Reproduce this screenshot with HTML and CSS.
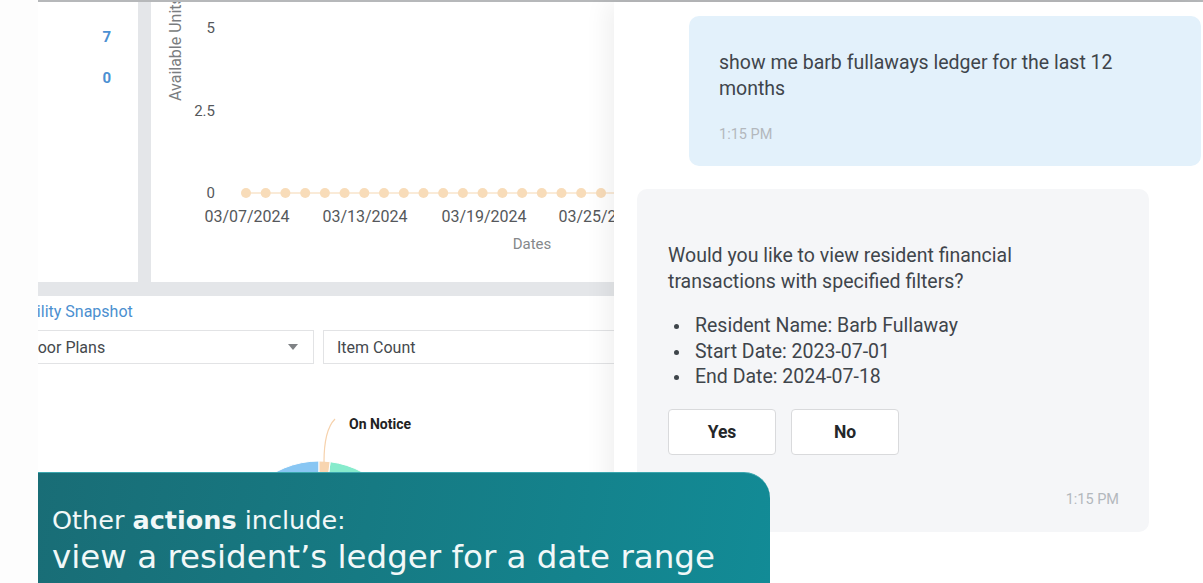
FILE: index.html
```html
<!DOCTYPE html>
<html lang="en">
<head>
<meta charset="utf-8">
<title>Resident ledger assistant</title>
<link rel="stylesheet" href="styles.css">
</head>
<body>
<div class="screen">
  <div class="gutter"></div>
  <div class="app">
    <section class="dash">
      <div class="card stats">
        <div class="stat">100</div>
        <div class="stat">7</div>
        <div class="stat">0</div>
      </div>
      <div class="card chart">
        <svg class="chart-svg" width="463" height="280" viewBox="0 0 463 280">
          <text class="axis-title" transform="translate(30,99) rotate(-90)">Available Units</text>
          <text class="tick" x="64" y="31.3">5</text>
          <text class="tick" x="64" y="114.3">2.5</text>
          <text class="tick" x="64" y="196.3">0</text>
          <line x1="95" y1="191" x2="470" y2="191" stroke="#f9e4cb" stroke-width="1.5"/>
          <g fill="#f8dcb9">
            <circle cx="95" cy="191" r="5"/><circle cx="114.7" cy="191" r="5"/><circle cx="134.4" cy="191" r="5"/><circle cx="154.2" cy="191" r="5"/><circle cx="173.9" cy="191" r="5"/><circle cx="193.6" cy="191" r="5"/><circle cx="213.3" cy="191" r="5"/><circle cx="233" cy="191" r="5"/><circle cx="252.8" cy="191" r="5"/><circle cx="272.5" cy="191" r="5"/><circle cx="292.2" cy="191" r="5"/><circle cx="311.9" cy="191" r="5"/><circle cx="331.6" cy="191" r="5"/><circle cx="351.4" cy="191" r="5"/><circle cx="371.1" cy="191" r="5"/><circle cx="390.8" cy="191" r="5"/><circle cx="410.5" cy="191" r="5"/><circle cx="430.2" cy="191" r="5"/><circle cx="450" cy="191" r="5"/><circle cx="469.7" cy="191" r="5"/>
          </g>
          <text class="xlabel" x="96" y="219.7">03/07/2024</text>
          <text class="xlabel" x="214" y="219.7">03/13/2024</text>
          <text class="xlabel" x="333" y="219.7">03/19/2024</text>
          <text class="xlabel" x="450" y="219.7">03/25/2024</text>
          <text class="axis-name" x="381" y="247.3">Dates</text>
        </svg>
      </div>
      <div class="card snapshot">
        <div class="snap-title">Availability Snapshot</div>
        <div class="filters">
          <div class="select select-plans">
            <span>Floor Plans</span>
            <span class="caret"></span>
          </div>
          <div class="select select-count"><span>Item Count</span></div>
        </div>
        <svg class="pie-svg" width="576" height="219" viewBox="0 0 576 219">
          <path d="M281,188 L281,97 A91,91 0 0,0 281,279 Z" fill="#88c6f3" stroke="#fff" stroke-width="1"/>
          <path d="M281,188 L292.1,97.7 A91,91 0 0,1 281,279 Z" fill="#86ebcc" stroke="#fff" stroke-width="1"/>
          <path d="M281,188 L281,97 A91,91 0 0,1 292.1,97.7 Z" fill="#f8d5b0" stroke="#fff" stroke-width="1"/>
          <path d="M286,98 C286,76 289,63 297,55" fill="none" stroke="#f6d2ad" stroke-width="1.2"/>
          <text class="pie-label" x="311" y="64.6">On Notice</text>
        </svg>
      </div>
    </section>
    <aside class="chat">
      <div class="bubble bubble-user">
        <p class="msg">show me barb fullaways ledger for the last 12 months</p>
        <div class="time">1:15 PM</div>
      </div>
      <div class="bubble bubble-bot">
        <p class="msg">Would you like to view resident financial transactions with specified filters?</p>
        <ul class="filters-list">
          <li>Resident Name: Barb Fullaway</li>
          <li>Start Date: 2023-07-01</li>
          <li>End Date: 2024-07-18</li>
        </ul>
        <div class="actions">
          <button class="btn">Yes</button>
          <button class="btn">No</button>
        </div>
        <div class="time time-right">1:15 PM</div>
      </div>
    </aside>
  </div>
  <div class="banner">
    <p class="banner-line1">Other <b>actions</b> include:</p>
    <p class="banner-line2">view a resident’s ledger for a date range</p>
  </div>
</div>
</body>
</html>
```

FILE: styles.css
```css
* { box-sizing: border-box; }

html, body {
  margin: 0;
  padding: 0;
  background: #fdfdfd;
}

body {
  font-family: Roboto, "Liberation Sans", Arial, sans-serif;
  color: #3f454b;
}

.screen {
  position: relative;
  display: flex;
  width: 1203px;
  height: 583px;
  overflow: hidden;
  background: #fdfdfd;
}

.gutter {
  flex: none;
  width: 38px;
}

.app {
  flex: 1;
  display: flex;
  border-top: 2px solid #b6b8ba;
  min-width: 0;
}

/* ---------- dashboard ---------- */
.dash {
  flex: none;
  width: 576px;
  display: grid;
  grid-template-columns: 100px 1fr;
  grid-template-rows: 280px 1fr;
  column-gap: 13px;
  row-gap: 14px;
  background: #e4e6e9;
  overflow: hidden;
}

.card {
  background: #fff;
  overflow: hidden;
}

.stats {
  padding-right: 27px;
  text-align: right;
}

.stat {
  font-size: 15px;
  font-weight: 700;
  line-height: 41px;
  color: #4b90d2;
}

.stat:first-child {
  margin-top: -26px;
}

.chart-svg {
  display: block;
  font-family: Roboto, "Liberation Sans", Arial, sans-serif;
}

.axis-title {
  font-size: 16px;
  fill: #7a7d80;
}

.tick {
  font-size: 15px;
  fill: #55585b;
  text-anchor: end;
}

.xlabel {
  font-size: 16px;
  fill: #55585b;
  text-anchor: middle;
}

.axis-name {
  font-size: 15px;
  fill: #85888b;
  text-anchor: middle;
}

.snapshot {
  grid-column: 1 / -1;
  padding-top: 6px;
}

.snap-title {
  margin-left: -53px;
  font-size: 16px;
  line-height: 20px;
  color: #4b8fd0;
  white-space: nowrap;
}

.filters {
  display: flex;
  gap: 9px;
  margin: 8px -30px 0 -26px;
}

.select {
  display: flex;
  align-items: center;
  height: 34px;
  padding: 0 12px;
  border: 1px solid #e2e3e5;
  font-size: 16px;
  color: #45494d;
  white-space: nowrap;
}

.select-plans {
  flex: none;
  width: 302px;
  justify-content: space-between;
  padding-right: 15px;
}

.select-count {
  flex: 1;
  padding-left: 13px;
}

.caret {
  width: 0;
  height: 0;
  border-left: 5px solid transparent;
  border-right: 5px solid transparent;
  border-top: 6px solid #7f8285;
}

.pie-svg {
  display: block;
  font-family: Roboto, "Liberation Sans", Arial, sans-serif;
}

.pie-label {
  font-size: 14px;
  font-weight: 700;
  fill: #222;
}

/* ---------- chat ---------- */
.chat {
  position: relative;
  z-index: 1;
  flex: 1;
  min-width: 0;
  padding-top: 14px;
  background: #fff;
  box-shadow: -8px 0 22px rgba(0, 0, 0, 0.06);
}

.bubble {
  border-radius: 10px;
}

.msg {
  margin: 0;
  font-size: 19.5px;
  line-height: 26px;
}

.time {
  font-size: 14.5px;
  line-height: 18px;
  color: #b3b8bd;
}

.bubble-user {
  margin: 0 2px 0 75px;
  padding: 34px 30px 22px 30px;
  background: #e3f1fb;
}

.bubble-user .time {
  margin-top: 24px;
}

.bubble-bot {
  width: 512px;
  margin: 23px 0 0 23px;
  padding: 54px 30px 23px 31px;
  background: #f5f6f8;
}

.filters-list {
  margin: 18px 0 0;
  padding-left: 0;
  list-style: none;
  font-size: 19.5px;
  line-height: 25.5px;
}

.filters-list li {
  display: flex;
}

.filters-list li::before {
  content: "";
  flex: none;
  width: 5px;
  height: 5px;
  margin: 11px 16px 0 6px;
  border-radius: 50%;
  background: #3f454b;
}

.actions {
  display: flex;
  gap: 15px;
  margin-top: 19.5px;
}

.btn {
  width: 108px;
  height: 46px;
  border: 1px solid #d9dadc;
  border-radius: 4px;
  background: #fff;
  font-family: Roboto, "Liberation Sans", Arial, sans-serif;
  font-size: 17.5px;
  font-weight: 700;
  color: #24272a;
}

.time-right {
  margin-top: 35.5px;
  text-align: right;
}

/* ---------- caption banner ---------- */
.banner {
  position: absolute;
  z-index: 2;
  left: 38px;
  top: 472px;
  width: 732px;
  height: 111px;
  padding: 33px 0 0 14px;
  border-top: 1px solid #3aa6ae;
  border-top-right-radius: 26px;
  background: linear-gradient(100deg, #196d76 0%, #167a83 45%, #128b96 100%);
  color: #f1f8f8;
  font-family: "DejaVu Sans", "Open Sans", sans-serif;
}

.banner p {
  margin: 0;
  white-space: nowrap;
}

.banner-line1 {
  font-size: 25.5px;
  line-height: 28px;
}

.banner-line1 b {
  font-weight: 700;
}

.banner-line2 {
  font-size: 32.5px;
  line-height: 46px;
}
```
